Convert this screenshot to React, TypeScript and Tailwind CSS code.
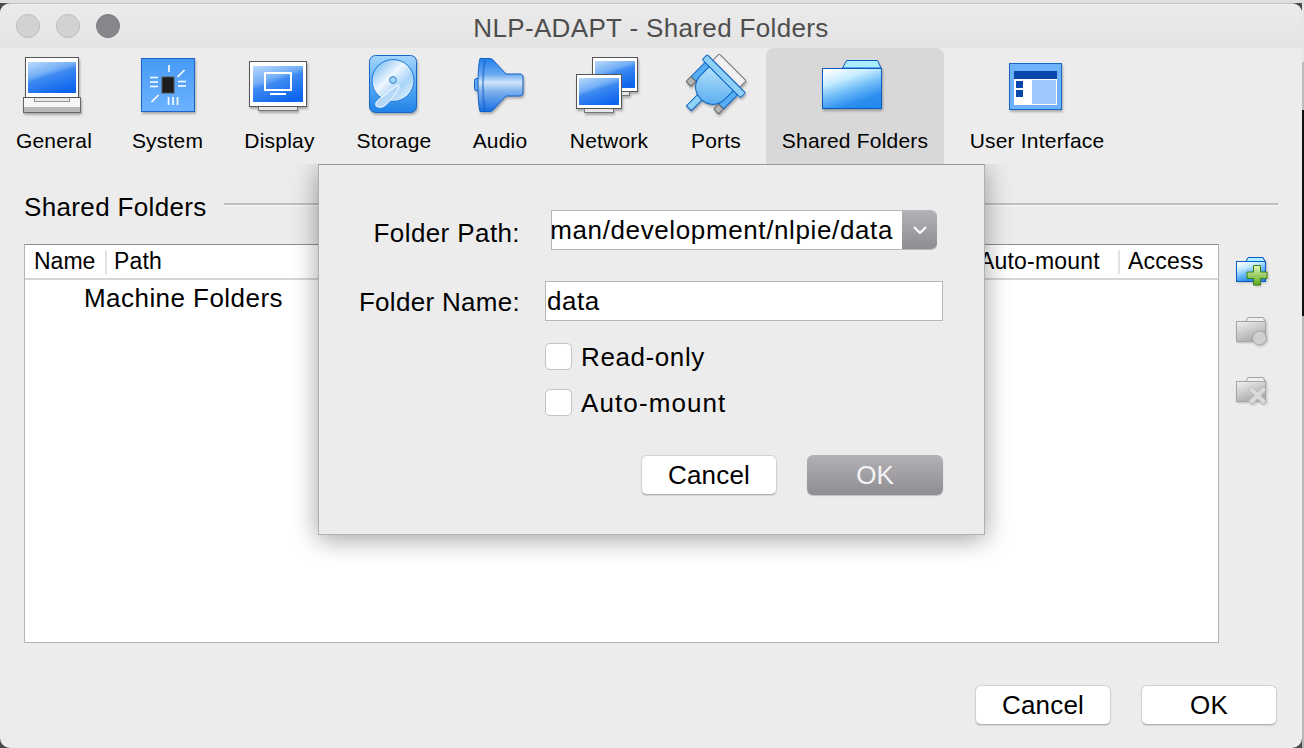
import React from "react"

const font = { fontFamily: '"Liberation Sans", Arial, sans-serif' }

const Defs = () => (
  <svg className="absolute w-0 h-0" aria-hidden="true">
    <defs>
      <linearGradient id="screen" x1="0.1" y1="0" x2="0.6" y2="1">
        <stop offset="0" stopColor="#b4d6fc" />
        <stop offset="0.38" stopColor="#72aef6" />
        <stop offset="0.5" stopColor="#3f8af2" />
        <stop offset="1" stopColor="#0f66ee" />
      </linearGradient>
      <linearGradient id="chipBg" x1="0" y1="0" x2="0" y2="1">
        <stop offset="0" stopColor="#479bf6" />
        <stop offset="1" stopColor="#6cb2ff" />
      </linearGradient>
      <linearGradient id="hdd" x1="0" y1="0" x2="0" y2="1">
        <stop offset="0" stopColor="#a6d6fb" />
        <stop offset="0.5" stopColor="#5dacf2" />
        <stop offset="1" stopColor="#1f82e8" />
      </linearGradient>
      <linearGradient id="disc" x1="0.1" y1="0.1" x2="0.9" y2="0.9">
        <stop offset="0" stopColor="#7fc0f3" />
        <stop offset="0.4" stopColor="#eef7ff" />
        <stop offset="0.7" stopColor="#a8d4f8" />
        <stop offset="1" stopColor="#e0f0ff" />
      </linearGradient>
      <linearGradient id="bell" x1="0" y1="0" x2="0" y2="1">
        <stop offset="0" stopColor="#1f80ec" />
        <stop offset="0.3" stopColor="#6caaf0" />
        <stop offset="0.45" stopColor="#d2e6fa" />
        <stop offset="0.62" stopColor="#7eb2ee" />
        <stop offset="1" stopColor="#176de4" />
      </linearGradient>
      <linearGradient id="port" x1="0" y1="0" x2="1" y2="1">
        <stop offset="0" stopColor="#b4e2fb" />
        <stop offset="1" stopColor="#4aa4ee" />
      </linearGradient>
      <linearGradient id="folder" x1="0.15" y1="0" x2="0.65" y2="1">
        <stop offset="0" stopColor="#ffffff" />
        <stop offset="0.3" stopColor="#c4ecff" />
        <stop offset="0.55" stopColor="#72bdf7" />
        <stop offset="0.85" stopColor="#2c8fef" />
        <stop offset="1" stopColor="#2589ee" />
      </linearGradient>
      <linearGradient id="greyFolder" x1="0.1" y1="0" x2="0.6" y2="1">
        <stop offset="0" stopColor="#eeeeee" />
        <stop offset="1" stopColor="#a8a8a8" />
      </linearGradient>
      <linearGradient id="plus" x1="0" y1="0" x2="0" y2="1">
        <stop offset="0" stopColor="#e4f5b4" />
        <stop offset="1" stopColor="#58a81e" />
      </linearGradient>
    </defs>
  </svg>
)

const Box = ({ cx, children }: { cx: number; children: React.ReactNode }) => (
  <svg
    width="72"
    height="72"
    viewBox={`${cx - 36} 52 72 72`}
    className="drop-shadow-[1px_2px_1px_rgba(0,0,0,0.28)]"
  >
    {children}
  </svg>
)

const GeneralIcon = () => (
  <Box cx={54}>
    <rect x="23.5" y="97.5" width="57" height="15" fill="#f6f6f6" stroke="#666" />
    <rect x="24" y="107" width="56" height="5" fill="#b8b8b8" />
    <rect x="34.5" y="97.5" width="35" height="4" fill="#e8e8e8" stroke="#999" />
    <rect x="25.5" y="57.5" width="53" height="40" fill="#fff" stroke="#555" />
    <rect x="28" y="62" width="48" height="31" fill="url(#screen)" />
  </Box>
)

const SystemIcon = () => (
  <Box cx={167}>
    <rect x="140.5" y="58.5" width="53" height="53" fill="url(#chipBg)" stroke="#1a66cc" />
    <rect x="161" y="77" width="12" height="16" fill="#1c1c1c" stroke="#555" />
    <g stroke="#fff" strokeWidth="1.6" fill="none">
      <path d="M168 65v7M176.5 77l7-7M177 81.5h8M177 86h8M149 77.5h8M149 82h8M149 86.5h8M150.5 102l7-7M167.5 97v8M172 97v8M176.5 97v8" />
    </g>
  </Box>
)

const DisplayIcon = () => (
  <Box cx={280}>
    <rect x="258.5" y="105" width="39" height="5.5" fill="#e6e6e6" stroke="#777" />
    <rect x="249.5" y="61.5" width="57" height="45" fill="#fff" stroke="#555" />
    <rect x="253" y="66" width="50" height="36" fill="url(#screen)" />
    <rect x="265" y="73" width="26" height="17" fill="none" stroke="#fff" strokeWidth="2" />
    <rect x="270" y="93" width="16" height="2" fill="#fff" />
  </Box>
)

const StorageIcon = () => (
  <Box cx={394}>
    <rect x="369.5" y="55.5" width="47" height="57" rx="6" fill="url(#hdd)" stroke="#1668c8" />
    <circle cx="393" cy="80.5" r="21" fill="url(#disc)" stroke="#1b78d8" />
    <circle cx="393" cy="80" r="3.4" fill="#a6d6f8" stroke="#2a7fd0" />
    <path
      d="M397 85.5c2-1 2.800.5 1.800 2.500-3 6-9 14-14.500 18-3 2-8 1.500-8.500-1-.5-2.500 2-5 5-7 5-3.500 11-9.500 16.200-12.500z"
      fill="#b6d8f6"
      stroke="#ffffff"
      strokeWidth="1"
    />
  </Box>
)

const AudioIcon = () => (
  <Box cx={500}>
    <rect x="474.500" y="78.500" width="6" height="12" rx="2" fill="#62a6f0" stroke="#1160c8" />
    <path
      d="M480 58.500h9c2 0 3 .5 4 1.500l13 14h14c2 0 3 1 3 3v16c0 2-1 3-3 3h-14l-13 14c-1 1-2 1.500-4 1.500h-9c-1.500-6-2-16-2-26.500s.5-20.500 2-26.500z"
      fill="url(#bell)"
      stroke="#1160c8"
    />
    <path d="M485 60c-1.500 7-2 15-2 25s.5 18 2 25" fill="none" stroke="#0f5cc4" strokeOpacity="0.5" strokeWidth="2" />
  </Box>
)

const Monitor = ({ x, y }: { x: number; y: number }) => (
  <g>
    <rect x={x + 8.5} y={y + 33.500} width="29" height="5" fill="#e6e6e6" stroke="#777" />
    <rect x={x + 0.5} y={y + 0.5} width="45" height="34" fill="#fff" stroke="#555" />
    <rect x={x + 3} y={y + 4} width="40" height="27" fill="url(#screen)" />
  </g>
)

const NetworkIcon = () => (
  <Box cx={609}>
    <Monitor x={592} y={57} />
    <Monitor x={576} y={74} />
  </Box>
)

const PortsIcon = () => (
  <Box cx={716}>
    <g transform="rotate(45 715 85)" strokeLinejoin="round">
      <g transform="translate(715 85)" stroke="#0f62c4">
        <rect x="-19" y="-25" width="38" height="9" rx="1" fill="#f2f2f2" stroke="#777" />
        <rect x="-5.500" y="18" width="7" height="17" fill="#8ed0f6" />
        <rect x="-23" y="-9" width="7" height="20" fill="#58aef0" />
        <rect x="16" y="-9" width="7" height="20" fill="#58aef0" />
        <rect x="-23" y="11" width="7" height="7" rx="1" fill="#b4b4b4" stroke="#666" />
        <rect x="16" y="11" width="7" height="7" rx="1" fill="#b4b4b4" stroke="#666" />
        <path d="M-17-9h34v12c0 10-7 17-17 17s-17-7-17-17z" fill="url(#port)" />
        <rect x="-27" y="-16" width="54" height="7" rx="1" fill="#8ed0f6" />
      </g>
    </g>
  </Box>
)

const SharedIcon = () => (
  <Box cx={855}>
    <path d="M842.500 68l4-7.500h31l3.500 7.500z" fill="#a8eeff" stroke="#0a5bc4" />
    <rect x="822.500" y="68.500" width="59" height="40" fill="url(#folder)" stroke="#0a5bc4" />
  </Box>
)

const InterfaceIcon = () => (
  <Box cx={1037}>
    <rect x="1009.500" y="63.500" width="52" height="46" fill="#6cb2ff" stroke="#1a66c4" />
    <rect x="1014" y="79" width="43" height="26" fill="#fff" />
    <rect x="1014" y="71" width="43" height="8" fill="#0a47ab" />
    <rect x="1032" y="80" width="24" height="24" fill="#9cc7ff" />
    <rect x="1016" y="81" width="7" height="7" fill="#0a47ab" />
    <rect x="1016" y="90" width="7" height="7" fill="#0a47ab" />
  </Box>
)

const tools = [
  { label: "General", icon: <GeneralIcon />, width: "w-[106px]" },
  { label: "System", icon: <SystemIcon />, width: "w-[103px]" },
  { label: "Display", icon: <DisplayIcon />, width: "w-[103px]" },
  { label: "Storage", icon: <StorageIcon />, width: "w-[108px]" },
  { label: "Audio", icon: <AudioIcon />, width: "w-[86px]" },
  { label: "Network", icon: <NetworkIcon />, width: "w-[114px]" },
  { label: "Ports", icon: <PortsIcon />, width: "w-[82px]" },
  { label: "Shared Folders", icon: <SharedIcon />, width: "w-[178px]", active: true },
  { label: "User Interface", icon: <InterfaceIcon />, width: "w-[168px]" },
]

const SideIcon = ({ kind }: { kind: "add" | "edit" | "remove" }) => {
  const add = kind === "add"
  const stroke = add ? "#0a5bc4" : "#a6a6a6"
  return (
    <svg width="34" height="30" viewBox="0 0 34 30" className="drop-shadow-[1px_1px_1px_rgba(0,0,0,0.2)]">
      <path d="M10 4.500l2-4h15l2 4z" fill={add ? "#a8eeff" : "#eeeeee"} stroke={stroke} />
      <rect x="0.5" y="4.500" width="29" height="20" fill={add ? "url(#folder)" : "url(#greyFolder)"} stroke={stroke} />
      {add && (
        <path
          d="M17.500 8.500h7v6.500h6.500v6.500h-6.500v6.500h-7v-6.500h-6.500v-6.500h6.500z"
          fill="url(#plus)"
          stroke="#3a8010"
        />
      )}
      {kind === "edit" && <circle cx="23.500" cy="21" r="7" fill="#cfcfcf" stroke="#a6a6a6" />}
      {kind === "remove" && (
        <path
          d="M12.500 13l3.500-3.500 5.500 5.500 5.500-5.500 3.500 3.500-5.500 5.500 5.500 5.500-3.500 3.500-5.500-5.500-5.500 5.500-3.500-3.500 5.500-5.500z"
          fill="#dadada"
          stroke="#b4b4b4"
        />
      )}
    </svg>
  )
}

const Button = ({ label }: { label: string }) => (
  <button className="w-[136px] h-10 rounded-[6px] bg-white border border-[#d2d2d2] border-b-[#b4b4b4] text-[26px] tracking-[0.2px] text-black leading-none shadow-[0_1px_1px_rgba(0,0,0,0.12)]">
    {label}
  </button>
)

const Checkbox = ({ label, spacing }: { label: string; spacing: string }) => (
  <label className="flex items-center">
    <span className="w-[27px] h-[27px] rounded-[5px] bg-white border border-[#c4c4c4]" />
    <span className={`ml-[9px] text-[26px] leading-none text-black ${spacing}`}>{label}</span>
  </label>
)

const FolderDialog = () => (
  <div className="absolute left-[318px] top-0 w-[667px] h-[371px] flex flex-col bg-[#ececec] border border-[#b0b0b0] border-t-[#9a9a9a] shadow-[0_4px_24px_rgba(0,0,0,0.38)] pt-[45px] pr-[41px]">
    <div className="flex items-center h-10">
      <span className="w-[201px] text-right text-[26px] tracking-[0.4px] text-black leading-none mt-[6px]">Folder Path:</span>
      <div className="ml-[31px] flex w-[386px] h-10 rounded-r-[6px] overflow-hidden border border-[#b6b6b6] border-r-0">
        <div className="flex-1 bg-white flex justify-end items-center overflow-hidden pr-[9px] whitespace-nowrap text-[26px] tracking-[0.62px] text-black">
          human/development/nlpie/data
        </div>
        <div className="w-[35px] bg-gradient-to-b from-[#b3b1b6] to-[#8f8d92] flex items-center justify-center">
          <svg width="16" height="10" viewBox="0 0 16 10" fill="none" stroke="#fff" strokeWidth="2">
            <path d="M2 2l6 6 6-6" />
          </svg>
        </div>
      </div>
    </div>
    <div className="flex items-center h-10 mt-[31px]">
      <span className="w-[201px] text-right text-[26px] tracking-[0.3px] text-black leading-none mt-[2px]">Folder Name:</span>
      <div className="ml-[25px] w-[398px] h-10 bg-white border border-[#b6b6b6] flex items-center pl-px text-[26px] tracking-[0.5px] text-black">
        data
      </div>
    </div>
    <div className="flex flex-col gap-[19px] mt-[22px] ml-[226px]">
      <Checkbox label="Read-only" spacing="tracking-[0.6px]" />
      <Checkbox label="Auto-mount" spacing="tracking-[1.1px]" />
    </div>
    <div className="flex justify-end gap-[30px] mt-[39px]">
      <Button label="Cancel" />
      <button className="w-[136px] h-10 rounded-[6px] bg-gradient-to-b from-[#b3b1b6] to-[#8f8d92] text-[26px] text-[#f4f4f4] leading-none shadow-[0_1px_1px_rgba(0,0,0,0.2)]">
        OK
      </button>
    </div>
  </div>
)

const App = () => {
  return (
    <div style={font} className="w-[1304px] h-[748px] flex overflow-hidden bg-[#4a4a4a] antialiased">
      <Defs />
      <div className="flex-none w-[1302px] h-[748px] flex flex-col">
        <div className="h-[3px] bg-[#dedede] -mr-[2px]" />
        <div className="flex-1 flex flex-col overflow-hidden rounded-t-[10px] rounded-b-[10px] bg-[#ececec] border-t border-[#c6c6c6]">
          {/* Title bar */}
          <div className="h-[44px] flex-none relative flex items-center justify-center bg-gradient-to-b from-[#ebebeb] to-[#e4e4e4]">
            <div className="absolute left-4 flex gap-4">
              <span className="w-6 h-6 rounded-full bg-[#d2d2d2] border border-[#bdbdbd]" />
              <span className="w-6 h-6 rounded-full bg-[#d2d2d2] border border-[#bdbdbd]" />
              <span className="w-6 h-6 rounded-full bg-[#88868a] border border-[#7c7a7e]" />
            </div>
            <span className="mt-1 text-[26px] text-[#4e4e4e] tracking-[0.35px]">NLP-ADAPT - Shared Folders</span>
          </div>

          {/* Toolbar */}
          <div className="h-[116px] flex-none flex pl-[1px] gap-[9px]">
            {tools.map((t) => (
              <div
                key={t.label}
                className={`${t.width} flex flex-col items-center pt-1 rounded-t-[8px] ${t.active ? "bg-[#d8d8d8]" : ""}`}
              >
                {t.icon}
                <span className="mt-1 text-[21px] tracking-[0.2px] leading-[26px] text-black whitespace-nowrap">{t.label}</span>
              </div>
            ))}
          </div>

          {/* Settings page, the dialog hangs from its top edge */}
          <div className="flex-1 relative overflow-hidden flex flex-col pl-6 pr-[24px]">
            <div className="flex items-center mt-[27px] h-[32px]">
              <span className="text-[26px] tracking-[0.35px] leading-none text-black">Shared Folders</span>
              <div className="flex-1 ml-[17px] mb-[7px] h-[2px] bg-[#bfbfbf] shadow-[0_1px_0_#f8f8f8]" />
            </div>
            <div className="flex mt-[21px]">
              <div className="w-[1195px] h-[399px] bg-white border border-[#b4b4b4] border-t-[#8e8e8e]">
                <div className="h-[35px] flex items-center border-b-2 border-[#d6d6d6] text-[23px] tracking-[0.2px] text-black">
                  <span className="w-[80px] pl-[9px] tracking-normal">Name</span>
                  <span className="w-[2px] h-6 bg-[#e2e2e2]" />
                  <span className="flex-1 pl-[7px]">Path</span>
                  <span className="w-[139px]">Auto-mount</span>
                  <span className="w-[2px] h-6 bg-[#e2e2e2]" />
                  <span className="w-[98px] pl-2">Access</span>
                </div>
                <div className="pl-[59px] pt-[3px] text-[26px] tracking-[0.45px] leading-[30px] text-black">Machine Folders</div>
              </div>
              <div className="ml-[17px] pt-[13px] flex flex-col gap-[30px]">
                <SideIcon kind="add" />
                <SideIcon kind="edit" />
                <SideIcon kind="remove" />
              </div>
            </div>
            <div className="flex justify-end gap-[30px] mt-[42px] mr-px">
              <Button label="Cancel" />
              <Button label="OK" />
            </div>
            <FolderDialog />
          </div>
        </div>
      </div>
      <div className="flex-none w-[2px] flex flex-col pt-[3px]">
        <div className="h-[59px] bg-[#e6e6e6]" />
        <div className="h-[48px] bg-[#bbbbbb]" />
        <div className="h-[206px] bg-[#111111]" />
        <div className="flex-1 bg-[#b8b8b8]" />
      </div>
    </div>
  )
}

export default App
